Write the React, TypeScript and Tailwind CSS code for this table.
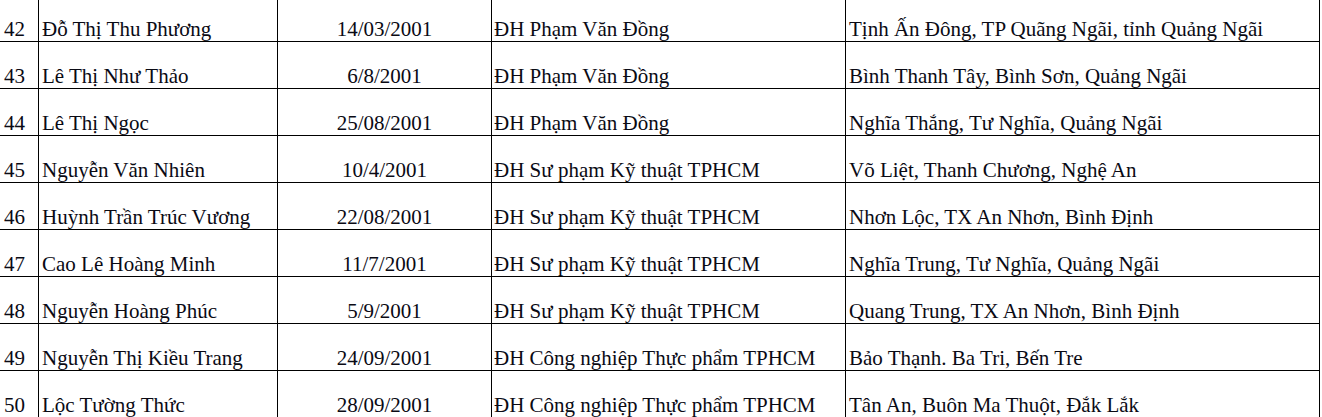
const rows = [
  ["42", "Đỗ Thị Thu Phương", "14/03/2001", "ĐH Phạm Văn Đồng", "Tịnh Ấn Đông, TP Quãng Ngãi, tỉnh Quảng Ngãi"],
  ["43", "Lê Thị Như Thảo", "6/8/2001", "ĐH Phạm Văn Đồng", "Bình Thanh Tây, Bình Sơn, Quảng Ngãi"],
  ["44", "Lê Thị Ngọc", "25/08/2001", "ĐH Phạm Văn Đồng", "Nghĩa Thắng, Tư Nghĩa, Quảng Ngãi"],
  ["45", "Nguyễn Văn Nhiên", "10/4/2001", "ĐH Sư phạm Kỹ thuật TPHCM", "Võ Liệt, Thanh Chương, Nghệ An"],
  ["46", "Huỳnh Trần Trúc Vương", "22/08/2001", "ĐH Sư phạm Kỹ thuật TPHCM", "Nhơn Lộc, TX An Nhơn, Bình Định"],
  ["47", "Cao Lê Hoàng Minh", "11/7/2001", "ĐH Sư phạm Kỹ thuật TPHCM", "Nghĩa Trung, Tư Nghĩa, Quảng Ngãi"],
  ["48", "Nguyễn Hoàng Phúc", "5/9/2001", "ĐH Sư phạm Kỹ thuật TPHCM", "Quang Trung, TX An Nhơn, Bình Định"],
  ["49", "Nguyễn Thị Kiều Trang", "24/09/2001", "ĐH Công nghiệp Thực phẩm TPHCM", "Bảo Thạnh. Ba Tri, Bến Tre"],
  ["50", "Lộc Tường Thức", "28/09/2001", "ĐH Công nghiệp Thực phẩm TPHCM", "Tân An, Buôn Ma Thuột, Đắk Lắk"],
];

export default function App() {
  return (
    <div className="w-[1322px] h-[417px] overflow-hidden bg-white text-[#0a0a14] text-[21px] leading-[24px] font-['Liberation_Serif','Times_New_Roman',serif]">
      <div className="mt-[-5px]">
        {rows.map(([no, name, dob, school, addr]) => (
          <div key={no} className="flex h-[47px] w-[1320px] border-b border-black">
            <div className="w-[39px] border-r border-black flex items-end pl-[4px] whitespace-nowrap">{no}</div>
            <div className="w-[239px] border-r border-black flex items-end pl-[3px] whitespace-nowrap">{name}</div>
            <div className="w-[214px] border-r border-black flex items-end justify-center whitespace-nowrap">{dob}</div>
            <div className="w-[354px] border-r border-black flex items-end pl-[2px] whitespace-nowrap">{school}</div>
            <div className="w-[474px] border-r border-black flex items-end pl-[3px] whitespace-nowrap">{addr}</div>
          </div>
        ))}
      </div>
    </div>
  );
}
